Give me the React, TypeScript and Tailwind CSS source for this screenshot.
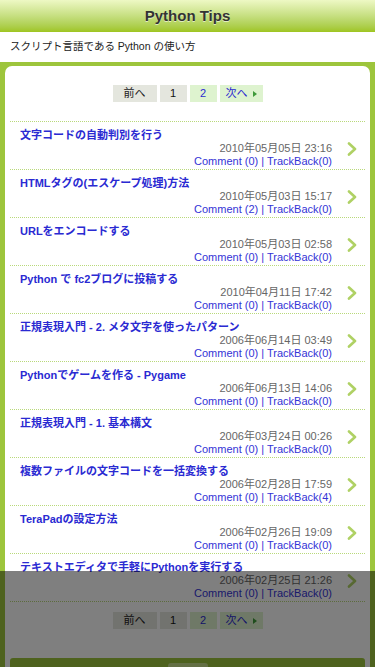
import React from "react";

type Entry = { title: string; date: string; comments: number; tb: number };

const entries: Entry[] = [
  { title: "文字コードの自動判別を行う", date: "2010年05月05日 23:16", comments: 0, tb: 0 },
  { title: "HTMLタグの(エスケープ処理)方法", date: "2010年05月03日 15:17", comments: 2, tb: 0 },
  { title: "URLをエンコードする", date: "2010年05月03日 02:58", comments: 0, tb: 0 },
  { title: "Python で fc2ブログに投稿する", date: "2010年04月11日 17:42", comments: 0, tb: 0 },
  { title: "正規表現入門 - 2. メタ文字を使ったパターン", date: "2006年06月14日 03:49", comments: 0, tb: 0 },
  { title: "Pythonでゲームを作る - Pygame", date: "2006年06月13日 14:06", comments: 0, tb: 0 },
  { title: "正規表現入門 - 1. 基本構文", date: "2006年03月24日 00:26", comments: 0, tb: 0 },
  { title: "複数ファイルの文字コードを一括変換する", date: "2006年02月28日 17:59", comments: 0, tb: 4 },
  { title: "TeraPadの設定方法", date: "2006年02月26日 19:09", comments: 0, tb: 0 },
  { title: "テキストエディタで手軽にPythonを実行する", date: "2006年02月25日 21:26", comments: 0, tb: 0 },
];

function Chevron() {
  return (
    <svg width="10" height="14" viewBox="0 0 10 14" className="shrink-0">
      <polyline points="2,1.5 8,7 2,12.5" fill="none" stroke="#afd164" strokeWidth="2.6" strokeLinecap="round" strokeLinejoin="round" />
    </svg>
  );
}

function Pager() {
  return (
    <div className="flex justify-center gap-[3px] text-[11px] leading-[17px]">
      <div className="w-[44px] h-[17px] bg-[#e4e6de] text-[#222] flex items-center justify-center">前へ</div>
      <div className="w-[27px] h-[17px] bg-[#e4e6de] text-[#111] flex items-center justify-center">1</div>
      <div className="w-[27px] h-[17px] bg-[#def3cf] text-[#2a2ad0] flex items-center justify-center">2</div>
      <div className="w-[43px] h-[17px] bg-[#def3cf] text-[#2a2ad0] flex items-center justify-center gap-[5px]">
        <span>次へ</span>
        <svg width="4" height="6" viewBox="0 0 4 6"><polygon points="0,0 4,3 0,6" fill="#3f9a3a" /></svg>
      </div>
    </div>
  );
}

export default function App() {
  return (
    <div className="min-h-[760px] bg-[#9dc53c] font-['Liberation_Sans','Noto_Sans_CJK_JP',sans-serif]">
      <div className="h-[32px] bg-gradient-to-b from-[#eef8c4] to-[#9fc51e] flex items-center justify-center">
        <h1 className="text-[15px] font-bold text-[#333] [text-shadow:0_1px_0_rgba(255,255,255,0.6)]">Python Tips</h1>
      </div>
      <div className="h-[30px] bg-white flex items-center px-[10px] text-[10.5px] text-[#222]">
        スクリプト言語である Python の使い方
      </div>
      <div className="px-[5px] pt-[4px]">
        <div className="bg-white rounded-t-[7px] px-[5px]">
          <div className="pt-[19px] pb-[19px]">
            <Pager />
          </div>
          {entries.map((e, i) => (
            <div key={i} className="border-t border-dotted border-[#b9d97a] pt-[7px] pb-[1px] pl-[10px] pr-[8px] flex items-center">
              <div className="flex-1 min-w-0 text-[11px] leading-[13px]">
                <div className="font-bold text-[#2a2ad2] whitespace-nowrap">{e.title}</div>
                <div className="text-right text-[#666]">{e.date}</div>
                <div className="text-right text-[#3434d6]">
                  Comment ({e.comments}) | TrackBack({e.tb})
                </div>
              </div>
              <div className="w-[25px] flex justify-end pt-[1px]">
                <Chevron />
              </div>
            </div>
          ))}
          <div className="border-t border-dotted border-[#b9d97a] pt-[10px] pb-[29px]">
            <Pager />
          </div>
          <div className="h-[60px] bg-[#9dc53c] rounded-t-[3px] flex justify-center pt-[5px]">
            <div className="w-[40px] h-[12px] bg-[#c8e08a] rounded-[3px]" />
          </div>
        </div>
      </div>
      <div className="fixed left-0 right-0 bottom-0 h-[96px] bg-black/50" />
    </div>
  );
}
